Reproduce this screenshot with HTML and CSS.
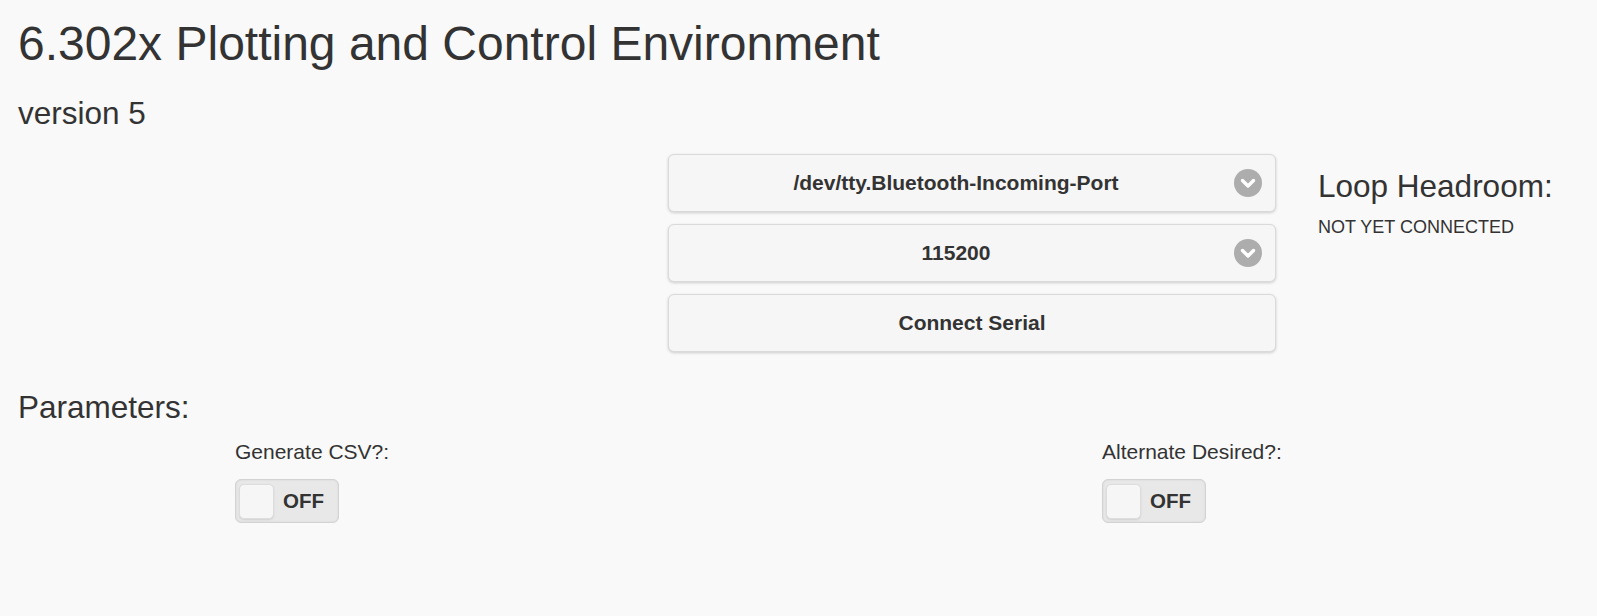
FILE: index.html
```html
<!DOCTYPE html>
<html lang="en">
<head>
  <meta charset="UTF-8">
  <title>6.302x Plotting and Control Environment</title>
  <link rel="stylesheet" href="styles.css">
</head>
<body>

  <h1 class="title">6.302x Plotting and Control Environment</h1>
  <h2 class="subtitle">version 5</h2>

  <!-- Serial connection -->
  <div class="top-row">
    <div class="spacer"></div>
    <div class="serial">
      <div class="select-btn">
        <span>/dev/tty.Bluetooth-Incoming-Port</span>
        <svg class="arrow" width="28" height="28" viewBox="0 0 28 28">
          <circle cx="14" cy="14" r="14" fill="#adadad"/>
          <polyline points="8.5,11.5 14,17 19.5,11.5" fill="none" stroke="#fff" stroke-width="3.4" stroke-linecap="round" stroke-linejoin="round"/>
        </svg>
      </div>
      <div class="select-btn">
        <span>115200</span>
        <svg class="arrow" width="28" height="28" viewBox="0 0 28 28">
          <circle cx="14" cy="14" r="14" fill="#adadad"/>
          <polyline points="8.5,11.5 14,17 19.5,11.5" fill="none" stroke="#fff" stroke-width="3.4" stroke-linecap="round" stroke-linejoin="round"/>
        </svg>
      </div>
      <div class="plain-btn">Connect Serial</div>
    </div>
    <div class="status">
      <h2 class="status-title">Loop Headroom:</h2>
      <p class="status-text">NOT YET CONNECTED</p>
    </div>
  </div>

  <!-- Parameters -->
  <h2 class="params-title">Parameters:</h2>
  <div class="params">
    <div class="spacer"></div>
    <div class="param">
      <label>Generate CSV?:</label>
      <div class="flip">
        <div class="flip-handle"></div>
        <span>OFF</span>
      </div>
    </div>
    <div class="param">
      <label>Alternate Desired?:</label>
      <div class="flip">
        <div class="flip-handle"></div>
        <span>OFF</span>
      </div>
    </div>
  </div>

</body>
</html>
```

FILE: styles.css
```css
body {
  font-family: 'Liberation Sans', Arial, sans-serif;
  background: #f9f9f9;
  color: #333;
  margin: 0;
  padding: 0 18px;
}

h1, h2, p {
  font-weight: normal;
  margin: 0;
}

.title {
  font-size: 48px;
  line-height: 56px;
  margin-top: 16px;
}

.subtitle {
  font-size: 31.5px;
  line-height: 37px;
  margin-top: 23px;
}

.top-row {
  display: grid;
  grid-template-columns: 650px 608px 1fr;
  margin-top: 22px;
}

.serial {
  display: flex;
  flex-direction: column;
  gap: 12px;
}

.select-btn,
.plain-btn {
  position: relative;
  height: 58px;
  box-sizing: border-box;
  background: #f6f6f6;
  border: 1px solid #dadada;
  border-radius: 6px;
  box-shadow: 0 1px 3px rgba(0, 0, 0, 0.18);
  font-size: 21px;
  font-weight: bold;
  display: flex;
  align-items: center;
  justify-content: center;
}

.select-btn {
  padding: 0 53px 0 21px;
}

.arrow {
  position: absolute;
  right: 13px;
  top: 14px;
}

.status {
  padding-left: 42px;
}

.status-title {
  font-size: 31.5px;
  line-height: 37px;
  margin-top: 14px;
}

.status-text {
  font-size: 18px;
  line-height: 21px;
  margin-top: 12px;
}

.params-title {
  font-size: 31.5px;
  line-height: 37px;
  margin-top: 37px;
}

.params {
  display: grid;
  grid-template-columns: 217px 867px 1fr;
  margin-top: 13px;
}

.param label {
  display: block;
  font-size: 21px;
  line-height: 25px;
}

.flip {
  margin-top: 15px;
  width: 104px;
  height: 44px;
  box-sizing: border-box;
  background: #e8e8e8;
  border: 1px solid #d3d3d3;
  border-radius: 6px;
  box-shadow: inset 0 0 2px rgba(0, 0, 0, 0.1);
  display: flex;
  align-items: center;
  padding: 0 0 0 3px;
}

.flip-handle {
  width: 35px;
  height: 35px;
  box-sizing: border-box;
  background: #f6f6f6;
  border: 1px solid #ddd;
  border-radius: 5px;
  box-shadow: 0 1px 2px rgba(0, 0, 0, 0.1);
}

.flip span {
  font-size: 20.5px;
  font-weight: bold;
  margin-left: 9px;
}
```
